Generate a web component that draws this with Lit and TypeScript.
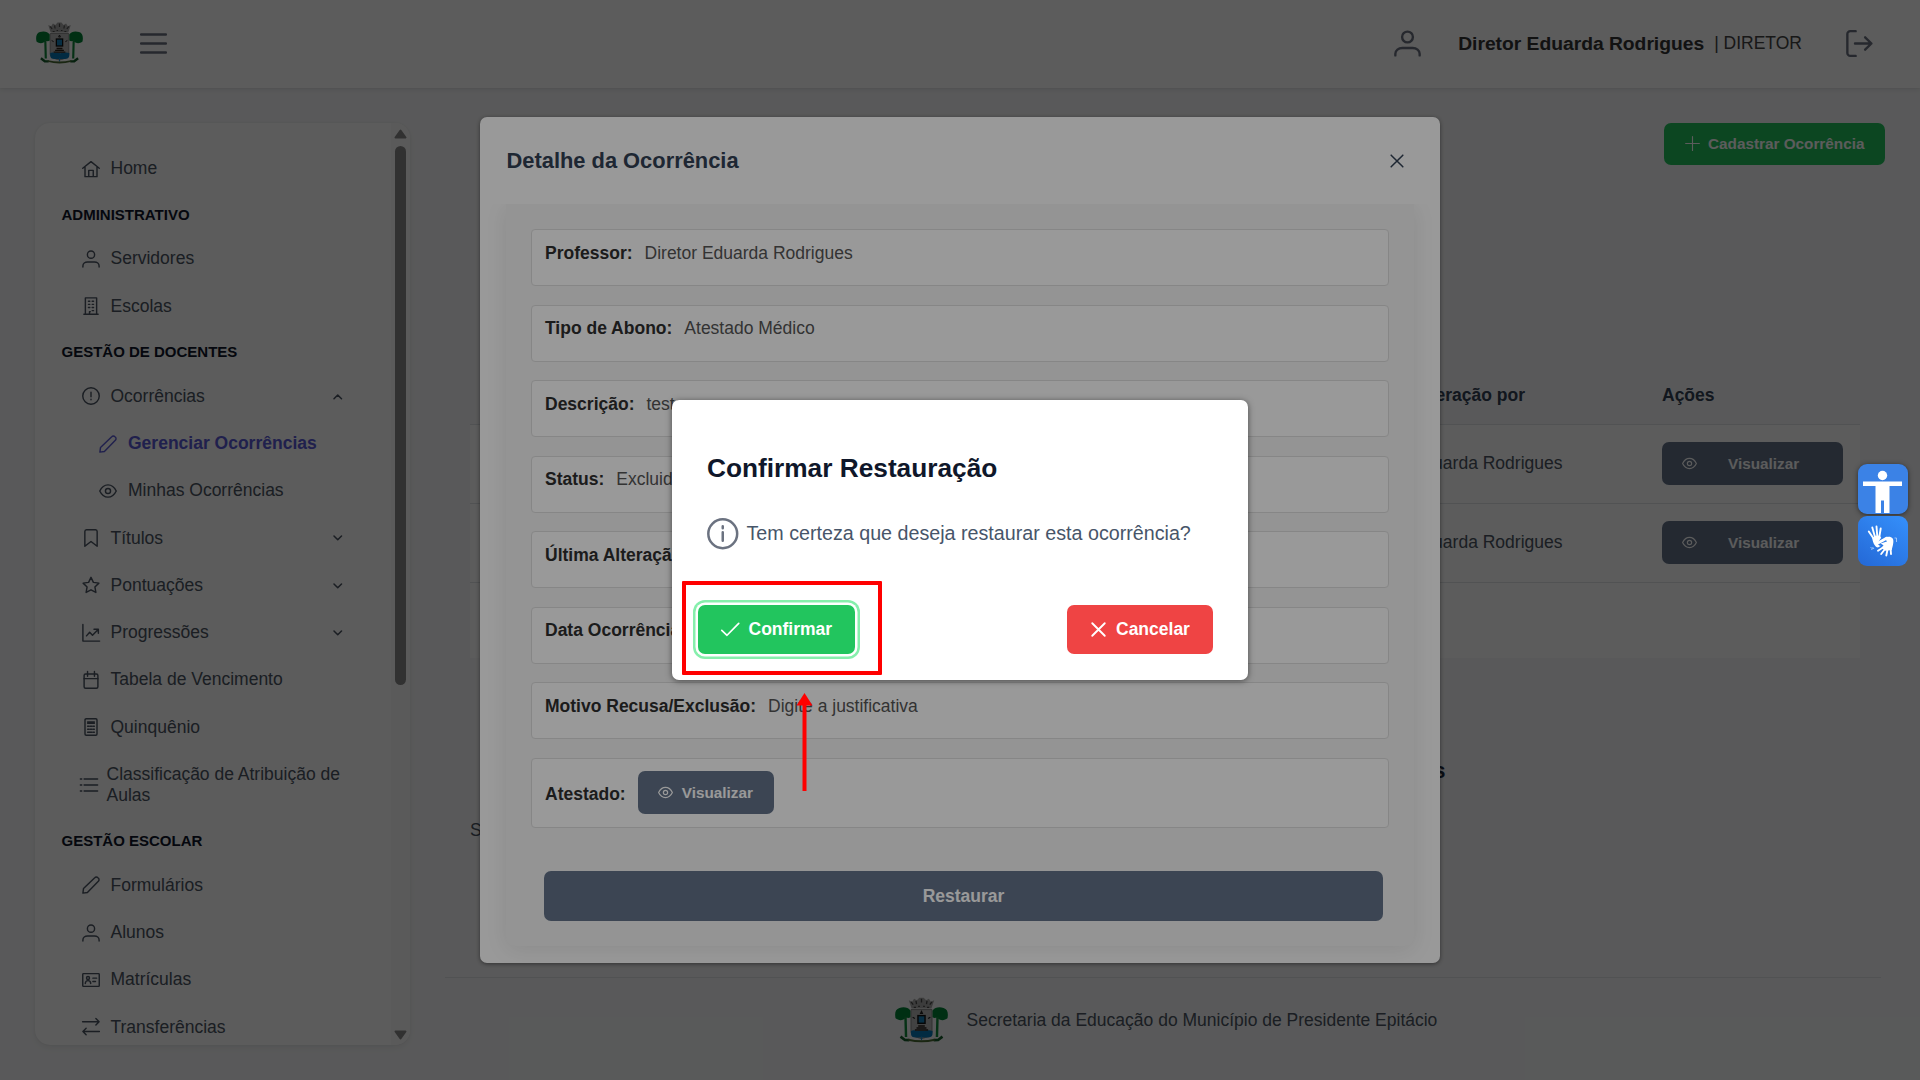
import { LitElement, html, css, svg, nothing } from "lit";
import { customElement, property } from "lit/decorators.js";

const ICONS: Record<string, any> = {
  home: svg`<path d="M1 11 12 2.2 23 11M4 9v13.2h16V9M9 22v-8.2h6V22"/>`,
  user: svg`<circle cx="12" cy="6.2" r="4.800"/><path d="M1.2 22.6v-1.4c0-3 2.8-5.2 6.2-5.2h9.2c3.4 0 6.2 2.2 6.2 5.2v1.400"/>`,
  building: svg`<path d="M4.5 23V1.2h15V23M2.5 23h19M10 23v-3.500h1M8.600 5.6h1.800M13.6 5.6h1.800M8.600 9.8h1.800M13.6 9.8h1.800M8.600 14h1.800M13.6 14h1.800M13.6 18.2h1.800"/>`,
  alert: svg`<circle cx="12" cy="12" r="11"/><path d="M12 7v6M12 16.200v.800"/>`,
  pencil: svg`<path d="M1.2 22.8l.8-6L17 2.2a2.9 2.9 0 0 1 4.2 0l.6.6a2.9 2.9 0 0 1 0 4.2L7.2 22z"/>`,
  eye: svg`<path d="M1 12C3.6 6.6 7.6 3.8 12 3.8S20.400 6.600 23 12c-2.600 5.400-6.600 8.200-11 8.200S3.600 17.400 1 12z"/><circle cx="12" cy="12" r="3.4"/>`,
  bookmark: svg`<path d="M3.800 23V3.400A2.300 2.300 0 0 1 6 1.100h12a2.300 2.300 0 0 1 2.200 2.300V23L12 16.600z"/>`,
  star: svg`<path d="M12 1.800l3.200 6.700 7.300 1-5.300 5.100 1.300 7.300L12 18.400l-6.500 3.500 1.300-7.300L1.500 9.500l7.300-1z"/>`,
  chart: svg`<path d="M1.200.500V22.800H23.500M6 15.800l4.200-4.800 3.800 4L21.500 7.400M16 7h5.800v5.400"/>`,
  calendar: svg`<rect x="2.800" y="4" width="18.400" height="19" rx="2"/><path d="M2.800 10.200h18.400M7.400.600v6.400M16.600.600v6.400"/>`,
  calc: svg`<rect x="4" y="1" width="16" height="22" rx="1.600"/><path d="M7.500 5.400h9M7.500 7h9M7.500 11h2M11 11h2M14.500 11h2M7.500 15h2M11 15h2M14.500 15h2M7.500 19h5.500M14.500 19h2"/>`,
  list: svg`<path d="M5.500 4h18M5.500 12h18M5.500 20h18M.500 4h1.800M.500 12h1.800M.500 20h1.800"/>`,
  card: svg`<rect x="1" y="3.500" width="22" height="17" rx="1"/><circle cx="8" cy="9.300" r="2"/><path d="M4.400 16.800c0-2.600 1.400-4 3.600-4s3.600 1.400 3.600 4M14.500 9.500h5M14.500 14h3.500"/>`,
  swap: svg`<path d="M.800 5h22M18.500.800 22.800 5l-4.300 4.200M23.200 18H1.200M5.500 13.800 1.200 18l4.300 4.200"/>`,
  up: svg`<path d="M2.500 17 12 7.500 21.500 17"/>`,
  down: svg`<path d="M2.500 7.500 12 17l9.500-9.500"/>`,
  menu: svg`<path d="M1 4h22M1 12h22M1 20h22"/>`,
  logout: svg`<path d="M8.600 1H3.800A2.600 2.600 0 0 0 1.200 3.600v16.800A2.600 2.600 0 0 0 3.800 23h4.800M8 12h14.500M17 6.500l5.600 5.500-5.600 5.500"/>`,
  plus: svg`<path d="M12 1v22M1 12h22"/>`,
  times: svg`<path d="M2 2l20 20M22 2l-20 20"/>`,
  check: svg`<path d="M1 13.500l6.800 6.300L23 4.400"/>`,
  info: svg`<circle cx="12" cy="12" r="11"/><path d="M12 10.800v6.600M12 6.300v1.500"/>`,
};

@customElement("ui-icon")
class UiIcon extends LitElement {
  @property() name = "";
  @property({ type: Number }) size = 18;
  @property({ type: Number }) weight = 1.9;
  static styles = css`
    :host { display: block; flex: none; line-height: 0; }
    svg { fill: none; stroke: currentColor; stroke-linecap: round; stroke-linejoin: round; overflow: visible; }
  `;
  render() {
    return html`<svg width=${this.size} height=${this.size} viewBox="0 0 24 24" stroke-width=${this.weight}>${ICONS[this.name]}</svg>`;
  }
}

@customElement("city-crest")
class CityCrest extends LitElement {
  @property({ type: Number }) width = 48;
  @property({ type: Number }) height = 42;
  static styles = css`
    :host { display: block; flex: none; line-height: 0; }
  `;
  render() {
    return html`<svg width=${this.width} height=${this.height} viewBox="0 0 48 42" preserveAspectRatio="none">
      <path d="M12.500 3l3 1.300L17.300 1.500l2.500 1.500L22 .600h4L28.200 3l2.500-1.500 1.800 2.800 3-1.300-2.500 7.500H15z" fill="#a8a8a8"/>
      <path d="M14.500 4.500l2 2.500M19 3.500l.500 3M24 1.500V5M29 3.500l-.500 3M33.500 4.500l-2 2.500M17 9.500h2M21 8.500h1.500M25.500 8.500H27M29 9.500h2" stroke="#4a4a4a" stroke-width="1.200" fill="none"/>
      <path d="M14.500 11.500h19v20c0 4-4 5-9.500 6.500-5.500-1.500-9.500-2.500-9.500-6.500z" fill="#b9b9b9" stroke="#888" stroke-width=".9"/>
      <path d="M14.500 31c3-1.500 4 .500 6 0s4 .500 6 0 5-1 7.500 0v2.500c0 2.500-2 3.500-4.500 3.500h-10.500c-3 0-4.500-1-4.500-3.500z" fill="#0878ba"/>
      <rect x="20.800" y="17" width="6.400" height="7" fill="#1683bd" stroke="#111" stroke-width="1.300"/>
      <path d="M24 13l.900 2h-1.800zM16 18.500l2 1.200M32 18.500l-2 1.200" stroke="#222" stroke-width="1" fill="none"/>
      <path d="M21 26.500h6M19.500 28.300h9M18 30.200h12" stroke="#2b241c" stroke-width="1.300"/>
      <path d="M24 36v3.500" stroke="#1c8fd1" stroke-width="1"/>
      <path d="M.500 19.500c-1-5 0-8.500 3.500-9.500 4-1.200 8-.500 10 2.500v6c-1.500 1-2.500.500-4 .500-2.500 2.500-6.500 3-9.500.500z" fill="#008437"/>
      <path d="M47.500 19.500c1-5 0-8.500-3.500-9.500-4-1.200-8-.500-10 2.500v6c1.500 1 2.500.500 4 .500 2.500 2.500 6.500 3 9.500.500z" fill="#008437"/>
      <path d="M9.500 18l.500 18.500M38.500 18l-.500 18.500" stroke="#118a3d" stroke-width="2.200"/>
      <path d="M5 36.200l4 3 4 .200M43 36.200l-4 3-4 .200" stroke="#145c2a" stroke-width="2.400" fill="none"/>
      <path d="M12 39c8 2 16 2 24 0" stroke="#4a6b35" stroke-width="1.800" fill="none"/>
    </svg>`;
  }
}

type Entry = { kind: "item" | "sub" | "cat"; label: string; icon?: string; arrow?: string; active?: boolean; tall?: boolean };

const MENU: Entry[] = [
  { kind: "item", label: "Home", icon: "home" },
  { kind: "cat", label: "ADMINISTRATIVO" },
  { kind: "item", label: "Servidores", icon: "user" },
  { kind: "item", label: "Escolas", icon: "building" },
  { kind: "cat", label: "GESTÃO DE DOCENTES" },
  { kind: "item", label: "Ocorrências", icon: "alert", arrow: "up" },
  { kind: "sub", label: "Gerenciar Ocorrências", icon: "pencil", active: true },
  { kind: "sub", label: "Minhas Ocorrências", icon: "eye" },
  { kind: "item", label: "Títulos", icon: "bookmark", arrow: "down" },
  { kind: "item", label: "Pontuações", icon: "star", arrow: "down" },
  { kind: "item", label: "Progressões", icon: "chart", arrow: "down" },
  { kind: "item", label: "Tabela de Vencimento", icon: "calendar" },
  { kind: "item", label: "Quinquênio", icon: "calc" },
  { kind: "item", label: "Classificação de Atribuição de Aulas", icon: "list", tall: true },
  { kind: "cat", label: "GESTÃO ESCOLAR" },
  { kind: "item", label: "Formulários", icon: "pencil" },
  { kind: "item", label: "Alunos", icon: "user" },
  { kind: "item", label: "Matrículas", icon: "card" },
  { kind: "item", label: "Transferências", icon: "swap" },
];

@customElement("side-menu")
class SideMenu extends LitElement {
  static styles = css`
    :host { display: flex; box-sizing: border-box; width: 375px; height: 922px; background: #fff; border-radius: 15px; overflow: hidden; box-shadow: 0 3px 6px rgba(0,0,0,.06), 0 0 3px rgba(0,0,0,.06); }
    .list { flex: 1; padding: 21.900px 26px 0 26.500px; overflow: hidden; height: 922px; box-sizing: border-box; }
    .item { display: flex; align-items: center; height: 47.280px; padding-left: 20px; color: #4b5563; gap: 11px; box-sizing: border-box; }
    .label { flex: 1; line-height: 21px; }
    .sub { padding-left: 37.500px; }
    .active { color: #5b5bd6; font-weight: 700; }
    .tall { height: 67.900px; padding-left: 18px; gap: 9px; }
    .cat { height: 43px; padding-top: 1px; display: flex; align-items: center; box-sizing: border-box; font-size: 15px; font-weight: 700; color: #0f172a; }
    .arrow { margin-right: 22.500px; }
    .bar { width: 19px; background: #fcfcfc; display: flex; flex-direction: column; align-items: center; justify-content: space-between; padding: 6px 0 5px; box-sizing: border-box; }
    .top { display: flex; flex-direction: column; align-items: center; gap: 7px; }
    .thumb { width: 11px; height: 539px; border-radius: 6px; background: #8b8b8b; }
    .tri { display: block; }
  `;
  render() {
    return html`
      <div class="list">
        ${MENU.map((e) => e.kind === "cat"
          ? html`<div class="cat">${e.label}</div>`
          : html`<div class="item ${e.kind} ${e.active ? "active" : ""} ${e.tall ? "tall" : ""}">
              <ui-icon name=${e.icon!} .size=${18}></ui-icon><span class="label">${e.label}</span>
              ${e.arrow ? html`<ui-icon class="arrow" name=${e.arrow} .size=${9.5} .weight=${3.8}></ui-icon>` : nothing}
            </div>`)}
      </div>
      <div class="bar">
        <div class="top">
          <svg class="tri" width="13" height="10" viewBox="0 0 13 10"><path d="M6.500 1.500L11.500 8.500H1.500z" fill="#8b8b8b" stroke="#8b8b8b" stroke-width="2" stroke-linejoin="round"/></svg>
          <div class="thumb"></div>
        </div>
        <svg class="tri" width="13" height="10" viewBox="0 0 13 10"><path d="M6.500 8.500L11.500 1.500H1.500z" fill="#8b8b8b" stroke="#8b8b8b" stroke-width="2" stroke-linejoin="round"/></svg>
      </div>`;
  }
}

const FIELDS = [
  ["Professor:", "Diretor Eduarda Rodrigues"],
  ["Tipo de Abono:", "Atestado Médico"],
  ["Descrição:", "teste"],
  ["Status:", "Excluida"],
  ["Última Alteração:", ""],
  ["Data Ocorrência:", ""],
  ["Motivo Recusa/Exclusão:", "Digite a justificativa"],
];

@customElement("app-root")
class AppRoot extends LitElement {
  static styles = css`
    :host { display: block; position: relative; width: 1920px; height: 1080px; overflow: hidden; background: #f8f9fa; font-family: "Liberation Sans", Arial, sans-serif; font-size: 17.500px; color: #4b5563; line-height: 21px; }
    .header { height: 88px; box-sizing: border-box; background: #fff; display: flex; align-items: center; padding: 0 47.500px 1.500px 35.500px; box-shadow: 0 2px 5px rgba(0,0,0,.08), 0 0 2px rgba(0,0,0,.08); position: relative; color: #6b7280; }
    .burger { margin-left: 57.500px; }
    .spacer { flex: 1; }
    .name { font-weight: 700; font-size: 19.250px; color: #333; margin-left: 37px; }
    .role { color: #444; margin-left: 10px; margin-right: 43.500px; }
    .body { display: flex; padding: 35px 39px 0 35px; justify-content: space-between; height: 992px; box-sizing: border-box; }
    .main { width: 1436px; display: flex; flex-direction: column; }
    .btn { display: flex; align-items: center; box-sizing: border-box; border-radius: 7px; color: #fff; font-weight: 700; font-size: 15.310px; background: #64748b; }
    .create { align-self: flex-end; margin-right: -4px; width: 221px; height: 42px; padding: 0 0 1px 21px; gap: 8px; background: #22c55e; }
    .table { margin: 220px 21px 0 25px; }
    .tr { display: grid; grid-template-columns: 1055px 137px 1fr; height: 79px; align-items: center; background: #fff; border-top: 1px solid #e2e4e8; box-sizing: border-box; padding-bottom: 2px; }
    .th { height: 39px; background: none; border: 0; align-items: start; font-weight: 700; color: #334155; }
    .cellw { grid-column: 1; text-align: right; white-space: nowrap; }
    .shift { margin-right: -37.500px; }
    .action { grid-column: 3; }
    .show { width: 181px; height: 43px; padding-left: 20px; gap: 31px; }
    .blank { height: 76px; }
    .totals { height: 22px; margin-top: 102px; display: flex; justify-content: flex-end; padding-right: 435.500px; font-size: 22px; font-weight: 700; color: #1e293b; }
    .summary { margin: 38px 0 0 25px; }
    .footer { border-top: 1px solid #e2e4e8; margin-top: auto; height: 103px; display: flex; align-items: flex-start; padding-left: 449.500px; padding-top: 19px; gap: 19px; box-sizing: border-box; }
    .footer span { padding-top: 13px; }
    .layer { position: absolute; left: 0; top: 0; width: 1920px; height: 1080px; background: rgba(0,0,0,.4); display: flex; align-items: center; justify-content: center; }
    .detail { width: 960px; height: 846px; box-sizing: border-box; background: #fff; border-radius: 7px; box-shadow: 0 1px 4px rgba(0,0,0,.45); overflow: hidden; display: flex; flex-direction: column; }
    .dhead { height: 87px; box-sizing: border-box; display: flex; justify-content: space-between; align-items: center; padding: 0 36.500px 0 26.500px; font-size: 21.875px; font-weight: 700; color: #334155; }
    .scroll { flex: 1; overflow: hidden; padding: 0 26px 17px; display: flex; }
    .panel { flex: 1; background: #f7f7f7; border-radius: 0 0 9px 9px; box-shadow: 0 4px 22px rgba(0,0,0,.09); padding: 25px 25px 0; box-sizing: border-box; display: flex; flex-direction: column; }
    .field { height: 57px; margin-bottom: 18.550px; box-sizing: border-box; border: 1px solid #e0e0e0; border-radius: 4px; background: #fff; padding: 12.600px 0 0 13px; display: flex; gap: 12px; align-items: flex-start; color: #555; white-space: nowrap; }
    .field b { color: #2f2f2f; }
    .attach { height: 70px; padding-top: 0; align-items: center; margin-bottom: 43px; }
    .attach b { padding-top: 3px; }
    .view { width: 136px; height: 43px; padding-left: 20px; gap: 9px; }
    .restore { width: 839px; height: 50px; padding-top: 1px; margin-left: 13px; justify-content: center; font-size: 17.500px; }
    .confirm { width: 576px; height: 280px; box-sizing: border-box; background: #fff; border-radius: 7px; box-shadow: 0 1px 6px rgba(0,0,0,.5); padding: 52px 35px 26px; display: flex; flex-direction: column; }
    .ctitle { font-size: 26.250px; line-height: 32px; font-weight: 700; color: #0f172a; }
    .msg { display: flex; align-items: center; margin-top: 33px; gap: 8px; height: 33px; font-size: 19.690px; color: #475569; white-space: nowrap; }
    .circle { color: #6b7280; }
    .acts { display: flex; justify-content: space-between; margin: auto 0 0 -9px; }
    .yes, .no { font-size: 17.500px; height: 49px; gap: 9px; padding-bottom: 1px; }
    .yes { width: 157px; background: #22c55e; padding-left: 23px; box-shadow: 0 0 0 2.500px #fff, 0 0 0 5px #86efac; }
    .no { width: 146px; background: #ef4444; padding-left: 24px; gap: 10px; }
    .mark { position: absolute; left: 682px; top: 581px; width: 200px; height: 94px; box-sizing: border-box; border: 4px solid #f00; border-radius: 1px; }
    .pointer { position: absolute; left: 796px; top: 693px; }
    .widgets { position: absolute; left: 1858px; top: 464px; display: flex; flex-direction: column; gap: 1.500px; }
    .wbtn { width: 50px; height: 50px; border-radius: 9px; background: #3b82e6; box-shadow: 0 1px 5px rgba(0,0,0,.5); display: block; }
    .libras { background: linear-gradient(215deg, #3590fb, #2468d6); box-shadow: none; }
  `;

  private row() {
    return html`<div class="tr">
      <div class="cellw shift">Diretor Eduarda Rodrigues</div>
      <div class="action"><div class="btn show"><ui-icon name="eye" .size=${15}></ui-icon>Visualizar</div></div>
    </div>`;
  }

  render() {
    return html`
      <div class="header">
        <city-crest .width=${47} .height=${42}></city-crest>
        <ui-icon class="burger" name="menu" .size=${27} .weight=${2.1}></ui-icon>
        <div class="spacer"></div>
        <ui-icon name="user" .size=${27} .weight=${2.1}></ui-icon>
        <span class="name">Diretor Eduarda Rodrigues</span>
        <span class="role">| DIRETOR</span>
        <ui-icon name="logout" .size=${27} .weight=${2.1}></ui-icon>
      </div>
      <div class="body">
        <side-menu></side-menu>
        <div class="main">
          <div class="btn create"><ui-icon name="plus" .size=${15} .weight=${1.8}></ui-icon>Cadastrar Ocorrência</div>
          <div class="table">
            <div class="tr th"><div class="cellw">Última Alteração por</div><div class="action">Ações</div></div>
            ${this.row()}${this.row()}
            <div class="tr blank"></div>
          </div>
          <div class="totals">s</div>
          <div class="summary">S</div>
          <div class="footer"><city-crest .width=${53} .height=${46}></city-crest><span>Secretaria da Educação do Município de Presidente Epitácio</span></div>
        </div>
      </div>

      <div class="layer">
        <div class="detail">
          <div class="dhead">Detalhe da Ocorrência<ui-icon name="times" .size=${14} .weight=${2.6}></ui-icon></div>
          <div class="scroll"><div class="panel">
            ${FIELDS.map(([k, v]) => html`<div class="field"><b>${k}</b><span>${v}</span></div>`)}
            <div class="field attach"><b>Atestado:</b><div class="btn view"><ui-icon name="eye" .size=${15}></ui-icon>Visualizar</div></div>
            <div class="btn restore">Restaurar</div>
          </div></div>
        </div>
      </div>

      <div class="layer">
        <div class="confirm">
          <div class="ctitle">Confirmar Restauração</div>
          <div class="msg"><ui-icon class="circle" name="info" .size=${31.5} .weight=${1.9}></ui-icon>Tem certeza que deseja restaurar esta ocorrência?</div>
          <div class="acts">
            <div class="btn yes"><ui-icon name="check" .size=${18.5} .weight=${2.2}></ui-icon>Confirmar</div>
            <div class="btn no"><ui-icon name="times" .size=${15} .weight=${3}></ui-icon>Cancelar</div>
          </div>
        </div>
      </div>

      <div class="mark"></div>
      <svg class="pointer" width="17" height="99" viewBox="0 0 17 99"><path d="M8.500 8v90" stroke="#f00" stroke-width="4"/><path d="M8.500 0L16.500 12.500H.500z" fill="#f00"/></svg>
      <div class="widgets">
        <svg class="wbtn" viewBox="0 0 50 50"><g fill="#fff"><circle cx="24.500" cy="11.500" r="4.700"/><path d="M5 17.500h39v4.500H31.500v27H26V36.500h-3V49h-5.500V22H5z"/></g></svg>
        <svg class="wbtn libras" viewBox="0 0 50 50">
          <g stroke="#fff" stroke-width="1.900" stroke-linecap="round" fill="none">
            <path d="M15.500 22.500L10.800 15.500M17 21L14.300 11.500M19.300 20.500L18.500 10.500M21.300 21L22.700 12.500"/>
            <path d="M25 31.500L20 34.800M27 33L23.200 38M29.500 33.500L28.300 39.500M32.500 31.500L33 38"/>
            <path d="M20 27L29 22" stroke-width="2.600"/>
          </g>
          <path d="M14.200 22.500L17 19.800h4.800l1.400 2-2.700 3.700c-1.500 2.300 0 4.300 2.500 4.300l-3 1.800c-3-.800-4.500-3.500-5.800-9.100z" fill="#fff"/>
          <path d="M22.500 27.500L29 25.500l-2.500-3.500c3-1.800 6.500-1.700 8.200.500 1.600 2.300 0 8-1 11.500l-6.200.700-4-2.700 2-2.700z" fill="#fff"/>
          <path d="M12.500 31.500l2 1-1 1.500M16 33l-1.500-2M36.500 22h2v4" stroke="#a9ccfb" stroke-width=".9" fill="none"/>
        </svg>
      </div>`;
  }
}
